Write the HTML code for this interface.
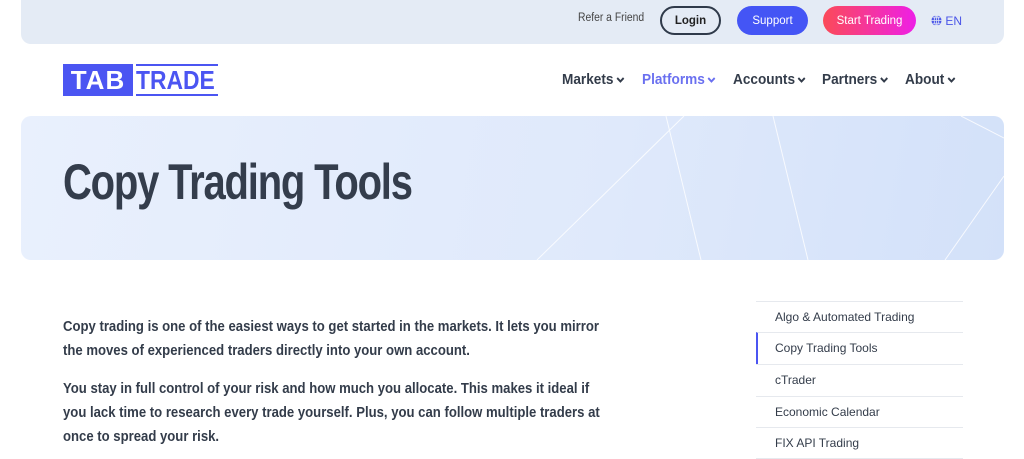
<!DOCTYPE html>
<html><head><meta charset="utf-8"><style>
*{margin:0;padding:0;box-sizing:border-box}
body{width:1024px;height:459px;overflow:hidden;background:#fff;font-family:"Liberation Sans",sans-serif;color:#2f3a4a;position:relative}
.top{position:absolute;left:21px;top:0;width:983px;height:44px;background:#e4ebf5;border-radius:0 0 10px 10px}
.abs{position:absolute}
.btn{position:absolute;top:6px;height:29px;border-radius:15px;font-size:11.5px;display:flex;align-items:center;justify-content:center}
.nav{position:absolute;top:72px;font-size:14.8px;font-weight:bold;color:#333c4a;transform:scaleX(.92);transform-origin:left;white-space:nowrap}
.nav svg{margin-left:3px;vertical-align:1px}
.hero{position:absolute;left:21px;top:116px;width:983px;height:144px;border-radius:10px;background:linear-gradient(100deg,#e9f0fd 0%,#dfe9fb 60%,#d3e1f9 100%);overflow:hidden}
p.t{position:absolute;left:63px;font-size:14.5px;font-weight:bold;line-height:24px;color:#333c4a;transform:scaleX(.905);transform-origin:left;white-space:nowrap}
.side{position:absolute;left:756px;width:207px;height:31.5px;border-top:1px solid #e6e9ee;font-size:12px;padding-left:19px;line-height:31px;color:#333c4a}
</style></head><body>
<div class="top"></div>
<div class="abs" style="left:578px;top:12px;font-size:11.5px;color:#444;transform:scaleX(.9);transform-origin:left">Refer a Friend</div>
<div class="btn" style="left:660px;width:61px;border:2px solid #2f3a4a;font-weight:bold;color:#222">Login</div>
<div class="btn" style="left:737px;width:71px;background:#4455f5;color:#fff">Support</div>
<div class="btn" style="left:823px;width:93px;background:linear-gradient(90deg,#fb4a58,#ee1fe6);color:#fff">Start Trading</div>
<div class="abs" style="left:931px;top:14px;font-size:12px;color:#4a55e8"><svg width="11" height="11" viewBox="0 0 12 12" style="vertical-align:-1px"><circle cx="6" cy="6" r="5.5" fill="#4a55e8"/><path d="M0.5 6h11M6 .5v11M2 3h8M2 9h8" stroke="#e4ebf5" stroke-width=".8" fill="none"/><ellipse cx="6" cy="6" rx="2.5" ry="5.5" stroke="#e4ebf5" stroke-width=".8" fill="none"/></svg> EN</div>

<div class="abs" style="left:63px;top:64px;width:70px;height:32px;background:#4b55f2;color:#fff;font-weight:bold;font-size:26px;line-height:32px;text-align:center;letter-spacing:1px">TAB</div>
<div class="abs" style="left:136px;top:64px;width:82px;height:32px;border-top:2px solid #4b55f2;border-bottom:2px solid #4b55f2;overflow:hidden"><div style="color:#4b55f2;font-weight:bold;font-size:26px;line-height:28px;transform:scaleX(.88);transform-origin:left;white-space:nowrap">TRADE</div></div>

<div class="nav" style="left:562px">Markets<svg width="9" height="6" viewBox="0 0 9 6"><path d="M1 1l3.5 3.5L8 1" stroke="currentColor" stroke-width="2" fill="none"/></svg></div>
<div class="nav" style="left:642px;color:#6a70f0">Platforms<svg width="9" height="6" viewBox="0 0 9 6"><path d="M1 1l3.5 3.5L8 1" stroke="currentColor" stroke-width="2" fill="none"/></svg></div>
<div class="nav" style="left:733px">Accounts<svg width="9" height="6" viewBox="0 0 9 6"><path d="M1 1l3.5 3.5L8 1" stroke="currentColor" stroke-width="2" fill="none"/></svg></div>
<div class="nav" style="left:822px">Partners<svg width="9" height="6" viewBox="0 0 9 6"><path d="M1 1l3.5 3.5L8 1" stroke="currentColor" stroke-width="2" fill="none"/></svg></div>
<div class="nav" style="left:905px">About<svg width="9" height="6" viewBox="0 0 9 6"><path d="M1 1l3.5 3.5L8 1" stroke="currentColor" stroke-width="2" fill="none"/></svg></div>

<div class="hero">
<svg width="983" height="144" style="position:absolute;left:0;top:0"><g stroke="#fff" stroke-width="1" opacity=".8" fill="none"><path d="M516 144L663 0M645 0L680 144M752 0L787 144M940 0L983 22M983 60L924 144"/></g></svg>
<div class="abs" style="left:42px;top:37px;font-size:50px;font-weight:bold;color:#343d4c;letter-spacing:-1.5px;transform:scaleX(.8);transform-origin:left;white-space:nowrap">Copy Trading Tools</div>
</div>

<p class="t" style="top:315px">Copy trading is one of the easiest ways to get started in the markets. It lets you mirror<br>the moves of experienced traders directly into your own account.</p>
<p class="t" style="top:377px">You stay in full control of your risk and how much you allocate. This makes it ideal if<br>you lack time to research every trade yourself. Plus, you can follow multiple traders at<br>once to spread your risk.</p>

<div class="side" style="top:301px">Algo &amp; Automated Trading</div>
<div class="side" style="top:332px;border-left:2px solid #4b55f2;padding-left:17px">Copy Trading Tools</div>
<div class="side" style="top:364px">cTrader</div>
<div class="side" style="top:396px">Economic Calendar</div>
<div class="side" style="top:427px;border-bottom:1px solid #e6e9ee">FIX API Trading</div>
</body></html>
